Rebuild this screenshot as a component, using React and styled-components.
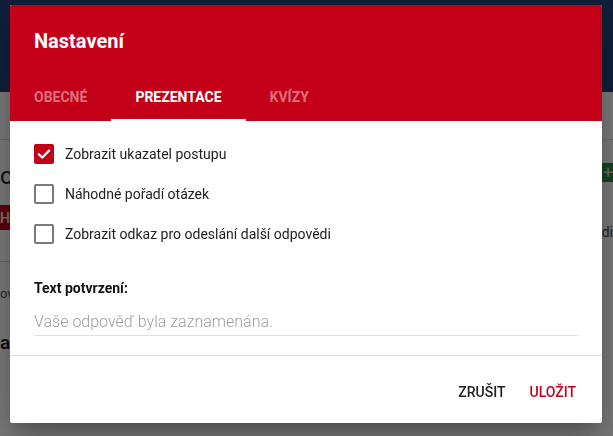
import React from "react";
import styled, { createGlobalStyle } from "styled-components";

const RED = "#c40019";

const Global = createGlobalStyle`
  html, body { margin: 0; padding: 0; }
  body {
    font-family: Roboto, "Liberation Sans", Arial, sans-serif;
    background: #ffffff;
    overflow: hidden;
  }
  * { box-sizing: border-box; }
`;

/* ---------- page behind the modal ---------- */
const Page = styled.div`
  width: 613px;
  height: 436px;
  background: #fff;
  display: flex;
  flex-direction: column;
`;

const TopBar = styled.div`
  height: 92px;
  background: #22417a;
  flex-shrink: 0;
`;

const SubBar = styled.div`
  height: 48px;
  border-bottom: 1px solid #d8d8d8;
  flex-shrink: 0;
`;

const Content = styled.div`
  display: flex;
  justify-content: space-between;
  flex: 1;
`;

const LeftCol = styled.div`
  display: flex;
  flex-direction: column;
  align-items: flex-start;
`;

const RightCol = styled.div`
  display: flex;
  flex-direction: column;
  align-items: flex-end;
`;

const PageTitle = styled.div`
  font-size: 24px;
  color: #222;
  margin-top: 22px;
  line-height: 28px;
`;

const PageButton = styled.div`
  margin-top: 15px;
  height: 25px;
  padding: 0 8px 0 0;
  background: #c40019;
  color: #fff;
  font-size: 14px;
  font-weight: 500;
  display: flex;
  align-items: center;
`;

const PageRule = styled.div`
  margin-top: 31px;
  width: 40px;
  border-top: 1px solid #cfcfcf;
`;

const PageSmall = styled.div`
  margin-top: 24px;
  font-size: 13px;
  color: #555;
`;

const PageBold = styled.div`
  margin-top: 30px;
  font-size: 19px;
  font-weight: 500;
  color: #111;
`;

const PlusBox = styled.div`
  margin-top: 23px;
  width: 11px;
  height: 19px;
  background: #2f8a40;
  color: #ddd;
  font-size: 18px;
  line-height: 19px;
  text-align: left;
  padding-left: 1px;
`;

const PageEdit = styled.div`
  margin-top: 42px;
  font-size: 14px;
  color: #444;
`;

/* ---------- modal ---------- */
const Overlay = styled.div`
  position: fixed;
  inset: 0;
  background: rgba(0, 0, 0, 0.52);
`;

const Dialog = styled.div`
  position: fixed;
  top: 5px;
  left: 10px;
  width: 592px;
  background: #fff;
  border-radius: 2px;
  overflow: hidden;
  box-shadow: 0 11px 15px -7px rgba(0, 0, 0, 0.2),
    0 24px 38px 3px rgba(0, 0, 0, 0.14), 0 9px 46px 8px rgba(0, 0, 0, 0.12);
  display: flex;
  flex-direction: column;
`;

const Header = styled.div`
  background: ${RED};
  display: flex;
  flex-direction: column;
`;

const Title = styled.h2`
  margin: 0;
  padding: 24px 24px 0;
  font-size: 20px;
  line-height: 24px;
  font-weight: 700;
  color: #fff;
`;

const Tabs = styled.div`
  display: flex;
  margin-top: 20px;
  height: 48px;
`;

const Tab = styled.div`
  height: 48px;
  padding: 2px 24px 0;
  display: flex;
  align-items: center;
  justify-content: center;
  font-size: 14px;
  font-weight: 700;
  text-transform: uppercase;
  color: ${(p) => (p.$active ? "#fff" : "rgba(255,255,255,0.45)")};
  border-bottom: 2px solid ${(p) => (p.$active ? "#fff" : "transparent")};
`;

const Body = styled.div`
  padding: 23px 24px 19px;
  display: flex;
  flex-direction: column;
`;

const CheckList = styled.div`
  display: flex;
  flex-direction: column;
  gap: 20px;
`;

const CheckRow = styled.label`
  display: flex;
  align-items: center;
  gap: 11px;
  height: 20px;
  font-size: 14px;
  color: #212121;
`;

const Box = styled.span`
  width: 20px;
  height: 20px;
  border-radius: 2px;
  flex-shrink: 0;
  display: flex;
  align-items: center;
  justify-content: center;
  background: ${(p) => (p.$checked ? RED : "#fff")};
  border: ${(p) => (p.$checked ? "none" : "2px solid #7a7a7a")};
`;

const Field = styled.div`
  margin-top: 36px;
  display: flex;
  flex-direction: column;
`;

const FieldLabel = styled.div`
  font-size: 14px;
  line-height: 17px;
  font-weight: 700;
  color: #111;
`;

const Input = styled.input`
  margin-top: 15px;
  padding: 0 0 4px;
  height: 24px;
  border: none;
  border-bottom: 1px solid #e0e0e0;
  font-family: inherit;
  font-size: 16px;
  line-height: 19px;
  font-weight: 300;
  color: #212121;
  outline: none;
  &::placeholder {
    color: #9e9e9e;
  }
`;

const Footer = styled.div`
  border-top: 1px solid #e0e0e0;
  height: 68px;
  display: flex;
  justify-content: flex-end;
  align-items: center;
  padding: 4px 14px 0 0;
`;

const TextButton = styled.button`
  border: none;
  background: none;
  font-family: inherit;
  font-size: 14px;
  font-weight: 500;
  text-transform: uppercase;
  padding: 8px 12px;
  color: ${(p) => (p.$primary ? RED : "#212121")};
  cursor: pointer;
`;

const Check = () => (
  <svg width="20" height="20" viewBox="0 0 20 20">
    <path
      d="M4.8 10.2 L8.4 13.6 L15.2 6.6"
      fill="none"
      stroke="#fff"
      strokeWidth="2.2"
      strokeLinecap="round"
      strokeLinejoin="round"
    />
  </svg>
);

const options = [
  { label: "Zobrazit ukazatel postupu", checked: true },
  { label: "Náhodné pořadí otázek", checked: false },
  { label: "Zobrazit odkaz pro odeslání další odpovědi", checked: false },
];

export default function App() {
  return (
    <>
      <Global />
      <Page>
        <TopBar />
        <SubBar />
        <Content>
          <LeftCol>
            <PageTitle>oc</PageTitle>
            <PageButton>HI</PageButton>
            <PageRule />
            <PageSmall>ov</PageSmall>
            <PageBold>a</PageBold>
          </LeftCol>
          <RightCol>
            <PlusBox>+</PlusBox>
            <PageEdit>edi</PageEdit>
          </RightCol>
        </Content>
      </Page>
      <Overlay />
      <Dialog>
        <Header>
          <Title>Nastavení</Title>
          <Tabs>
            <Tab>Obecné</Tab>
            <Tab $active>Prezentace</Tab>
            <Tab>Kvízy</Tab>
          </Tabs>
        </Header>
        <Body>
          <CheckList>
            {options.map((o) => (
              <CheckRow key={o.label}>
                <Box $checked={o.checked}>{o.checked && <Check />}</Box>
                {o.label}
              </CheckRow>
            ))}
          </CheckList>
          <Field>
            <FieldLabel>Text potvrzení:</FieldLabel>
            <Input placeholder="Vaše odpověď byla zaznamenána." />
          </Field>
        </Body>
        <Footer>
          <TextButton>Zrušit</TextButton>
          <TextButton $primary>Uložit</TextButton>
        </Footer>
      </Dialog>
    </>
  );
}
